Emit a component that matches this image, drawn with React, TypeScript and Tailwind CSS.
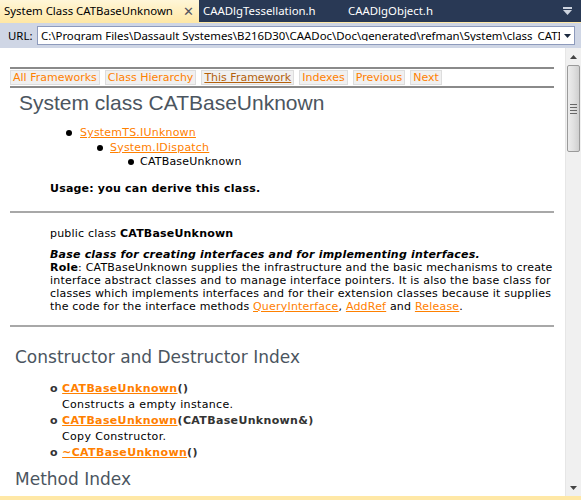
import React from "react";

const V = { fontFamily: '"DejaVu Sans", Verdana, sans-serif' };

function NavBtn({ label, active }: { label: string; active?: boolean }) {
  return (
    <span
      className={
        "inline-block h-[15px] px-[2px] leading-[13px] border border-[#dddddd] bg-[#f0f0f0] text-[11px] " +
        (active ? "text-[#b4600c] underline" : "text-[#ff8000]")
      }
    >
      {label}
    </span>
  );
}

export default function App() {
  return (
    <div className="w-[581px] h-[500px] overflow-hidden flex flex-col bg-white" style={V}>
      {/* Tab bar */}
      <div
        className="h-[22px] bg-[#293955] flex items-stretch text-[11.4px] shrink-0"
        style={{ fontFamily: '"Noto Sans", "Open Sans", sans-serif' }}
      >
        <div className="w-[199px] bg-gradient-to-b from-[#fff6d8] to-[#ffe8a6] flex items-center pl-[4px] text-black">
          <span className="whitespace-nowrap">System Class CATBaseUnknown</span>
          <span className="ml-[10px] text-[#55555f] text-[13px] leading-none">✕</span>
        </div>
        <div className="pl-[4px] flex items-center text-white whitespace-nowrap w-[149px]">CAADlgTessellation.h</div>
        <div className="flex items-center text-white whitespace-nowrap">CAADlgObject.h</div>
        <div className="flex-1" />
        <div className="w-[28px] flex items-center justify-center">
          <svg width="9" height="8" viewBox="0 0 9 8">
            <rect x="0" y="0" width="9" height="2" fill="#ced4df" />
            <polygon points="0,3 9,3 4.5,8" fill="#ced4df" />
          </svg>
        </div>
      </div>
      <div className="h-[1px] bg-[#ffe8a6] shrink-0" />
      {/* URL bar */}
      <div
        className="h-[25px] bg-[#cfd6e5] flex items-center shrink-0 text-[11.4px]"
        style={{ fontFamily: '"Noto Sans", "Open Sans", sans-serif' }}
      >
        <span className="ml-[8px] w-[29px] text-black">URL:</span>
        <div className="w-[538px] h-[19px] bg-white border border-[#8e9bbc] flex items-center">
          <span className="flex-1 overflow-hidden whitespace-nowrap pl-[3px] text-black leading-none">
            C:\Program Files\Dassault Systemes\B216D30\CAADoc\Doc\generated\refman\System\class_CATI
          </span>
          <span className="w-[14px] flex items-center justify-center">
            <svg width="7" height="4" viewBox="0 0 7 4">
              <polygon points="0,0 7,0 3.5,4" fill="#1b293e" />
            </svg>
          </span>
        </div>
      </div>
      {/* Content + scrollbar */}
      <div className="flex flex-1 min-h-0">
        <div className="flex-1 overflow-hidden pl-[10px] pr-[11px] text-[11px] text-black">
          <div className="h-[19px]" />
          <div className="border-t-2 border-[#8a8a8a] h-0" />
          <div className="flex gap-[5px] py-[1px] h-[17px] items-center">
            <NavBtn label="All Frameworks" />
            <NavBtn label="Class Hierarchy" />
            <NavBtn label="This Framework" active />
            <NavBtn label="Indexes" />
            <NavBtn label="Previous" />
            <NavBtn label="Next" />
          </div>
          <div className="border-t-2 border-[#8a8a8a] h-0" />
          <div
            className="ml-[9px] mt-[2px] text-[21px] leading-[26px] text-[#4b5560]"
            style={{ fontFamily: '"Liberation Sans", Arial, sans-serif' }}
          >
            System class CATBaseUnknown
          </div>
          <div className="mt-[10px] leading-[14.5px] tracking-[0.2px]">
            <div className="flex items-center ml-[56px]">
              <span className="w-[6px] h-[6px] rounded-full bg-black mr-[8px]" />
              <span className="text-[#ff8000] underline">SystemTS.IUnknown</span>
            </div>
            <div className="flex items-center ml-[87px]">
              <span className="w-[6px] h-[6px] rounded-full bg-black mr-[7px]" />
              <span className="text-[#ff8000] underline">System.IDispatch</span>
            </div>
            <div className="flex items-center ml-[118px]">
              <span className="w-[6px] h-[6px] rounded-full bg-black mr-[6px]" />
              <span>CATBaseUnknown</span>
            </div>
          </div>
          <div className="ml-[40px] mt-[12px] font-bold leading-[13px] tracking-[0.2px]">
            Usage: you can derive this class.
          </div>
          <div className="mt-[16px] border-t-2 border-[#a8a8a8] h-0" />
          <div className="ml-[40px] mt-[14px] leading-[13px] tracking-[0.2px]">
            public class <b>CATBaseUnknown</b>
          </div>
          <div className="ml-[40px] mt-[8px] leading-[13px] whitespace-nowrap tracking-[0.2px]">
            <div className="font-bold italic">Base class for creating interfaces and for implementing interfaces.</div>
            <div>
              <b>Role</b>: CATBaseUnknown supplies the infrastructure and the basic mechanisms to create
            </div>
            <div>interface abstract classes and to manage interface pointers. It is also the base class for</div>
            <div>classes which implements interfaces and for their extension classes because it supplies</div>
            <div>
              the code for the interface methods <span className="text-[#ff8000] underline">QueryInterface</span>,{" "}
              <span className="text-[#ff8000] underline">AddRef</span> and{" "}
              <span className="text-[#ff8000] underline">Release</span>.
            </div>
          </div>
          <div className="mt-[12px] border-t-2 border-[#a8a8a8] h-0" />
          <div className="ml-[5px] mt-[20px] text-[17px] leading-[20px] text-[#4b5560]">
            Constructor and Destructor Index
          </div>
          <div className="ml-[40px] mt-[14px] leading-[16px] tracking-[0.35px]">
            <div className="font-bold text-[#333]">
              o <span className="text-[#ff8000] underline">CATBaseUnknown</span>()
            </div>
            <div className="ml-[12px]">Constructs a empty instance.</div>
            <div className="font-bold text-[#333]">
              o <span className="text-[#ff8000] underline">CATBaseUnknown</span>(CATBaseUnknown&amp;)
            </div>
            <div className="ml-[12px]">Copy Constructor.</div>
            <div className="font-bold text-[#333]">
              o <span className="text-[#ff8000] underline">~CATBaseUnknown</span>()
            </div>
          </div>
          <div className="ml-[5px] mt-[8px] text-[17px] leading-[20px] text-[#4b5560]">Method Index</div>
        </div>
        {/* Scrollbar */}
        <div className="w-[16px] bg-[#f0f0f0] border-l border-[#e6e6e6] flex flex-col items-center shrink-0">
          <div className="h-[17px] flex items-center justify-center">
            <svg width="7" height="4" viewBox="0 0 7 4">
              <polygon points="3.5,0 7,4 0,4" fill="#444" />
            </svg>
          </div>
          <div className="w-[13px] h-[87px] rounded-[2px] border border-[#9a9a9a] bg-gradient-to-r from-[#ececec] via-[#e0e0e0] to-[#cfcfcf] flex flex-col items-center justify-center gap-[2px]">
            <div className="w-[7px] h-[1px] bg-[#666]" />
            <div className="w-[7px] h-[1px] bg-[#666]" />
            <div className="w-[7px] h-[1px] bg-[#666]" />
            <div className="w-[7px] h-[1px] bg-[#666]" />
          </div>
          <div className="flex-1" />
          <div className="h-[17px] flex items-center justify-center">
            <svg width="7" height="4" viewBox="0 0 7 4">
              <polygon points="0,0 7,0 3.5,4" fill="#444" />
            </svg>
          </div>
        </div>
      </div>
      <div className="h-[4px] bg-[#ffe8a6] shrink-0" />
    </div>
  );
}
